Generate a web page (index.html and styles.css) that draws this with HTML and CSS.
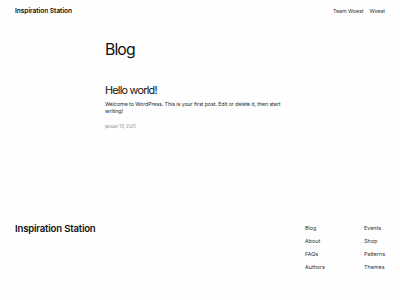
FILE: index.html
```html
<!DOCTYPE html>
<html lang="nl">
<head>
<meta charset="utf-8">
<title>Blog – Inspiration Station</title>
<link rel="stylesheet" href="styles.css">
</head>
<body>
<header class="site-header">
  <a class="site-title" href="#">Inspiration Station</a>
  <nav class="top-nav">
    <a href="#">Team Woest</a>
    <a href="#">Woest</a>
  </nav>
</header>
<main class="content">
  <h1 class="page-title">Blog</h1>
  <article class="post">
    <h2 class="post-title">Hello world!</h2>
    <p class="post-excerpt">Welcome to WordPress. This is your first post. Edit or delete it, then start writing!</p>
    <p class="post-date">januari 19, 2025</p>
  </article>
</main>
<footer class="site-footer">
  <a class="footer-title" href="#">Inspiration Station</a>
  <div class="footer-links">
    <ul class="link-col">
      <li><a href="#">Blog</a></li>
      <li><a href="#">About</a></li>
      <li><a href="#">FAQs</a></li>
      <li><a href="#">Authors</a></li>
    </ul>
    <ul class="link-col">
      <li><a href="#">Events</a></li>
      <li><a href="#">Shop</a></li>
      <li><a href="#">Patterns</a></li>
      <li><a href="#">Themes</a></li>
    </ul>
  </div>
</footer>
</body>
</html>
```
FILE: styles.css
```css
html, body {
  margin: 0;
  padding: 0;
}
body {
  width: 400px;
  height: 300px;
  background: #fefefe;
  color: #111;
  font-family: Inter, "Open Sans", "Liberation Sans", sans-serif;
  display: flex;
  flex-direction: column;
  overflow: hidden;
}
a {
  color: inherit;
  text-decoration: none;
}
.site-header {
  display: flex;
  justify-content: space-between;
  align-items: center;
  height: 22px;
  padding: 0 15px;
}
.site-title {
  font-size: 6.6px;
  font-weight: 600;
  letter-spacing: -0.05px;
}
.top-nav {
  display: flex;
  gap: 6px;
  font-size: 5.3px;
  letter-spacing: -0.05px;
  color: #333;
}
.content {
  padding: 20px 0 0 105px;
  width: 181px;
}
.page-title {
  margin: 0;
  font-size: 15.8px;
  font-weight: 400;
  line-height: 1;
  letter-spacing: -0.9px;
}
.post {
  margin-top: 27px;
}
.post-title {
  margin: 0;
  font-size: 10.8px;
  font-weight: 400;
  line-height: 1.1;
  letter-spacing: -0.75px;
}
.post-excerpt {
  margin: 4px 0 0;
  font-size: 5.3px;
  line-height: 7px;
  letter-spacing: -0.08px;
  color: #2a2a2a;
}
.post-date {
  margin: 9px 0 0;
  font-size: 4.2px;
  color: #888;
}
.site-footer {
  margin-top: auto;
  display: flex;
  justify-content: space-between;
  padding: 0 15px 29px;
}
.footer-title {
  font-size: 9.6px;
  font-weight: 600;
  letter-spacing: -0.2px;
  margin-top: -2px;
}
.footer-links {
  display: flex;
  width: 80px;
}
.link-col {
  list-style: none;
  margin: 0;
  padding: 0;
  width: 59px;
  display: flex;
  flex-direction: column;
  gap: 6px;
  font-size: 5.4px;
  line-height: 7px;
  color: #333;
}
.link-col + .link-col {
  width: 21px;
}
```
